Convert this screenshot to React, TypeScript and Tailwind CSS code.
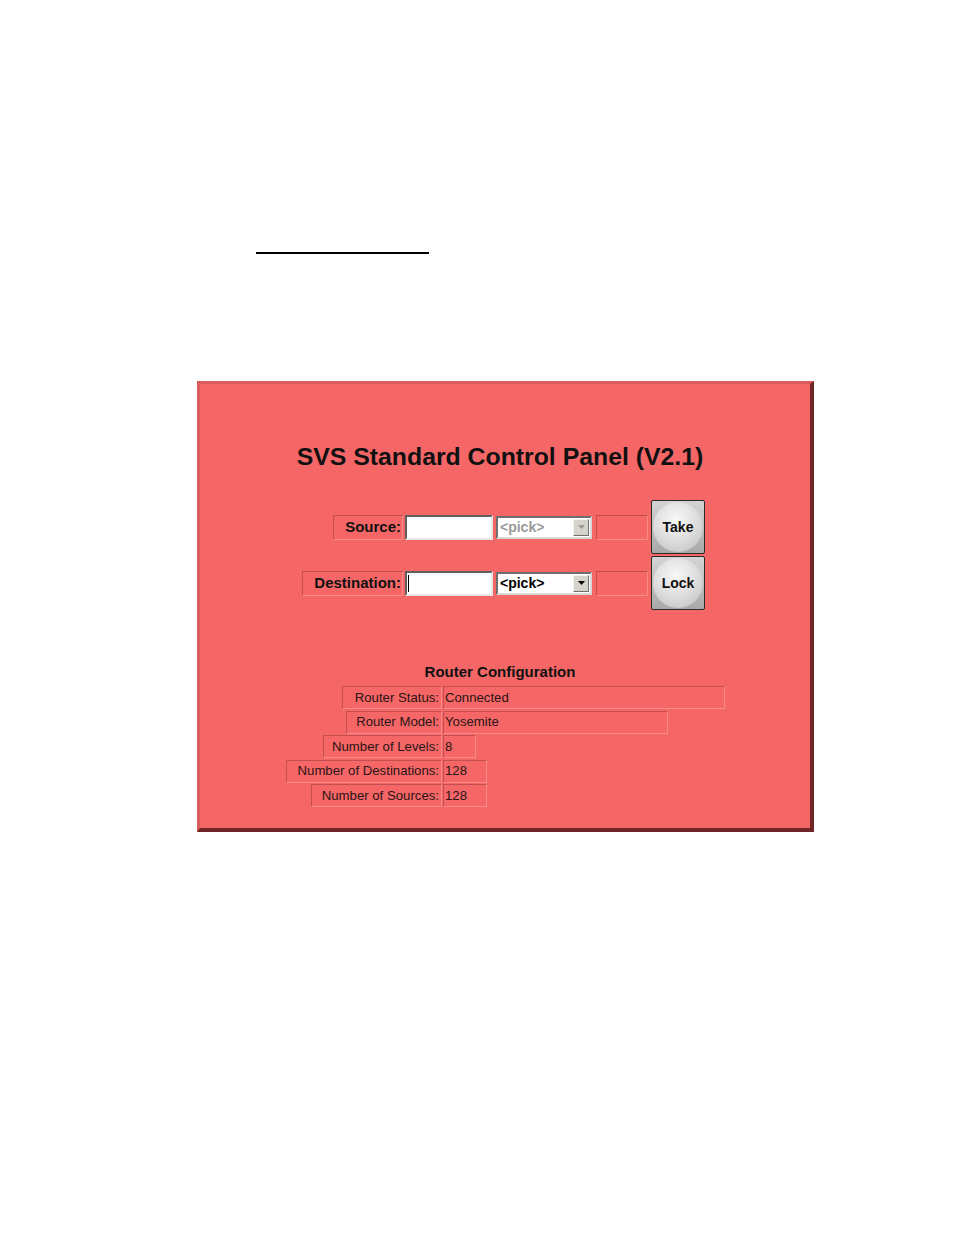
import React from "react";

const cell =
  "box-border h-[23px] border border-t-[#c44f4f] border-l-[#c44f4f] border-b-[#fb8a8a] border-r-[#fb8a8a]";

const configRows = [
  { label: "Router Status:", labelW: 100, value: "Connected", valueW: 282 },
  { label: "Router Model:", labelW: 96, value: "Yosemite", valueW: 225 },
  { label: "Number of Levels:", labelW: 119, value: "8", valueW: 33 },
  { label: "Number of Destinations:", labelW: 156, value: "128", valueW: 44 },
  { label: "Number of Sources:", labelW: 131, value: "128", valueW: 44 },
];

function PickSelect({ disabled }: { disabled?: boolean }) {
  return (
    <div className="ml-[3px] box-border flex h-[23px] w-[96px] items-stretch border-2 border-t-[#6e6e6e] border-l-[#6e6e6e] border-b-[#d8d8d8] border-r-[#d8d8d8] bg-white">
      <span
        className={
          "flex-1 pl-[2px] text-[14px] font-bold leading-[19px] " +
          (disabled ? "text-[#9a9a9a]" : "text-black")
        }
      >
        {"<pick>"}
      </span>
      <span className="my-[1px] mr-[1px] box-border flex w-[16px] items-center justify-center border border-t-[#f4f4f4] border-l-[#f4f4f4] border-b-[#707070] border-r-[#707070] bg-[#d6d3cc]">
        <svg width="7" height="4" viewBox="0 0 7 4">
          <polygon points="0,0 7,0 3.5,4" fill={disabled ? "#9a9a9a" : "#000"} />
        </svg>
      </span>
    </div>
  );
}

function RoundButton({ label }: { label: string }) {
  return (
    <div className="ml-[3px] box-border flex h-[54px] w-[54px] items-center justify-center rounded-[2px] border border-[#2a2a2a] bg-[linear-gradient(180deg,#d4d4d4,#a9a9a9)]">
      <div className="flex h-[50px] w-[50px] items-center justify-center rounded-full bg-[radial-gradient(circle_at_45%_35%,#f8f8f8_0%,#e6e6e6_35%,#cdcdcd_75%,#bdbdbd_100%)]">
        <span className="text-[14px] font-bold text-[#111]">{label}</span>
      </div>
    </div>
  );
}

function FormRow({ label, labelW, caret, disabled }: { label: string; labelW: number; caret?: boolean; disabled?: boolean }) {
  return (
    <div className="flex h-[54px] items-center">
      <div className="flex w-[203px] justify-end">
        <div
          className={cell + " flex h-[25px] items-center justify-end pr-[1px]"}
          style={{ width: labelW }}
        >
          <span className="text-[15px] font-bold text-[#111]">{label}</span>
        </div>
      </div>
      <div className="ml-[2px] box-border flex h-[25px] w-[88px] items-center border-2 border-t-[#5e5e5e] border-l-[#5e5e5e] border-b-[#e6e6e6] border-r-[#e6e6e6] bg-white">
        {caret && <span className="ml-[1px] h-[17px] w-[1px] bg-black" />}
      </div>
      <PickSelect disabled={disabled} />
      <div className={cell + " ml-[4px] h-[25px] w-[52px]"} />
      <RoundButton label={label === "Source:" ? "Take" : "Lock"} />
    </div>
  );
}

export default function App() {
  return (
    <div className="min-h-[1235px] bg-white font-['Liberation_Sans',Arial,sans-serif]">
      <div className="pt-[252px]">
        <div className="ml-[256px] h-[2px] w-[173px] bg-black" />
      </div>

      <div className="ml-[197px] mt-[127px] box-border h-[451px] w-[617px] border-t-[3px] border-l-[3px] border-b-[4px] border-r-[4px] border-t-[#d95c5c] border-l-[#d95c5c] border-b-[#6e2626] border-r-[#6e2626] bg-[#f56767] pt-[59px]">
        <div className="mr-[10px] text-center text-[24.8px] font-bold leading-[28px] text-[#111]">
          SVS Standard Control Panel (V2.1)
        </div>

        <div className="mt-[29px] flex flex-col gap-[2px]">
          <FormRow label="Source:" labelW={70} disabled />
          <FormRow label="Destination:" labelW={101} caret />
        </div>

        <div className="mr-[10px] mt-[53px] text-center text-[15px] font-bold leading-[18px] text-[#111]">
          Router Configuration
        </div>

        <div className="mt-[5px] flex flex-col">
          {configRows.map((r) => (
            <div key={r.label} className="flex h-[24.5px] items-start">
              <div className="flex w-[242px] justify-end">
                <div
                  className={cell + " flex items-center justify-end pr-[2px]"}
                  style={{ width: r.labelW }}
                >
                  <span className="text-[13.2px] text-[#2a1414]">{r.label}</span>
                </div>
              </div>
              <div
                className={cell + " ml-[1px] flex items-center pl-[1px]"}
                style={{ width: r.valueW }}
              >
                <span className="text-[13.2px] text-[#2a1414]">{r.value}</span>
              </div>
            </div>
          ))}
        </div>
      </div>
    </div>
  );
}
